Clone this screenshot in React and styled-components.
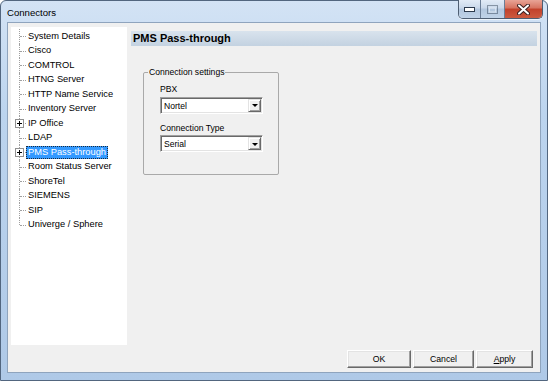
import styled, { createGlobalStyle } from "styled-components";

const GlobalStyle = createGlobalStyle`
  html, body { margin: 0; padding: 0; }
  body {
    width: 548px; height: 381px; overflow: hidden; background: #fff;
    font-family: "Liberation Sans", Arial, sans-serif; color: #000;
  }
`;

const Frame = styled.div`
  box-sizing: border-box;
  width: 548px; height: 381px;
  display: flex; flex-direction: column;
  background: linear-gradient(180deg, #d3e3f5 0%, #bcd4ee 30%, #afc9e7 100%);
  border: 1px solid #52667f;
  border-radius: 6px 6px 0 0;
  padding: 0 6px 7px 6px;
`;

const TitleBar = styled.div`
  height: 21px; flex: none;
  display: flex; align-items: flex-start;
  margin-right: -2px;
`;

const Title = styled.span`
  font-size: 9.6px; line-height: 12px; padding-top: 6px;
`;

const Caption = styled.div`
  margin-left: auto; margin-top: -1px;
  display: flex; height: 18px;
  border: 1px solid #4e5e73; border-top: none;
  border-radius: 0 0 5px 5px; overflow: hidden;
  box-shadow: 0 1px 0 rgba(255,255,255,0.6);
`;

const CapBtn = styled.div`
  width: ${({ $w }) => $w}px; height: 100%;
  display: flex; align-items: center; justify-content: center;
  background: ${({ $close }) => $close
    ? "linear-gradient(180deg, #e8a496 0%, #d6725f 45%, #c2412a 50%, #cc5a3f 100%)"
    : "linear-gradient(180deg, #e2ebf6 0%, #c9d8ea 45%, #b2c6de 50%, #c0d3e8 100%)"};
  & + & { border-left: 1px solid #6b7e97; }
`;

const Client = styled.div`
  flex: 1; display: flex; flex-direction: column;
  background: #f0f0f0;
  border: 1px solid #8fa4bd;
`;

const Body = styled.div`
  height: 322px; flex: none; box-sizing: border-box;
  display: flex; padding: 4px 3px 0 3px;
`;

const Tree = styled.div`
  width: 116px; height: 318px; flex: none; box-sizing: border-box;
  background: #fff; padding: 2px 0 0 1px;
`;

const Row = styled.div`
  display: flex; align-items: center; height: 14.5px;
`;

const Gutter = styled.span`
  position: relative; width: 14px; align-self: stretch; flex: none;
  &::before {
    content: ''; position: absolute; left: 7px; top: 0;
    bottom: ${({ $last }) => ($last ? "50%" : "0")};
    border-left: 1px dotted #a0a0a0;
  }
  &::after {
    content: ''; position: absolute; left: 8px; right: 0; top: 50%;
    border-top: 1px dotted #a0a0a0;
  }
`;

const Expander = styled.span`
  position: absolute; left: 3px; top: calc(50% - 4px); z-index: 1;
  width: 9px; height: 9px; box-sizing: border-box;
  border: 1px solid #919191; background: #fff;
  &::before { content: ''; position: absolute; left: 1px; top: 3px; width: 5px; height: 1px; background: #000; }
  &::after { content: ''; position: absolute; left: 3px; top: 1px; width: 1px; height: 5px; background: #000; }
`;

const ItemLabel = styled.span`
  font-size: 9.3px; line-height: 11px; white-space: nowrap;
  padding: 0 1px; border: 1px solid transparent;
  background: ${({ $selected }) => ($selected ? "#3399ff" : "transparent")};
  color: ${({ $selected }) => ($selected ? "#fff" : "#000")};
  outline: ${({ $selected }) => ($selected ? "1px dotted #1b2a3a" : "none")};
  outline-offset: -1px;
`;

const Panel = styled.div`
  flex: 1; display: flex; flex-direction: column;
  margin-left: 4px; padding-top: 4px;
`;

const PanelHeader = styled.div`
  height: 15px; line-height: 15px; padding-left: 2px;
  font-size: 11px; font-weight: bold; color: #000;
  background: linear-gradient(180deg, #d9e3ed 0%, #c3d2e1 100%);
`;

const Group = styled.fieldset`
  margin: 21px 0 0 12px; width: 136px; height: 108px; box-sizing: border-box;
  border: 1px solid #a9a9a9; border-radius: 2px;
  padding: 5px 14px 0 16px;
  display: flex; flex-direction: column; gap: 7px;
`;

const Legend = styled.legend`
  font-size: 8.6px; line-height: 10px; padding: 0 1px; margin-left: -12px;
`;

const Field = styled.div`
  display: flex; flex-direction: column; gap: 3.5px;
`;

const FieldLabel = styled.span`
  font-size: 8.6px; line-height: 8px; padding-top: 3px;
`;

const Combo = styled.div`
  box-sizing: border-box; width: 103px; height: 17px;
  display: flex; background: #fff; padding: 1px;
  border: 1px solid; border-color: #a0a0a0 #fff #fff #a0a0a0;
  box-shadow: inset 1px 1px 0 #696969, inset -1px -1px 0 #e3e3e3;
`;

const ComboText = styled.span`
  flex: 1; font-size: 8.6px; line-height: 12px; padding: 1px 0 0 2px;
`;

const DropBtn = styled.span`
  width: 13px; height: 13px; box-sizing: border-box; flex: none;
  background: #f0f0f0;
  border: 1px solid; border-color: #e3e3e3 #696969 #696969 #e3e3e3;
  box-shadow: inset 1px 1px 0 #fff, inset -1px -1px 0 #a0a0a0;
  display: flex; align-items: center; justify-content: center;
  &::after {
    content: ''; margin-top: 1px;
    border-left: 3px solid transparent; border-right: 3px solid transparent;
    border-top: 3px solid #000;
  }
`;

const Footer = styled.div`
  display: flex; justify-content: flex-end; gap: 2px;
  padding: 5px 7px 4px 0;
`;

const Button = styled.button`
  box-sizing: border-box; height: 18px; width: ${({ $w }) => $w}px;
  padding: 0; background: #f0f0f0; color: #000;
  font-family: "Liberation Sans", Arial, sans-serif; font-size: 8.7px;
  border: 1px solid; border-color: #fff #696969 #696969 #fff;
  box-shadow: inset -1px -1px 0 #a0a0a0, inset 1px 1px 0 #e3e3e3;
`;

const items = [
  { label: "System Details" },
  { label: "Cisco" },
  { label: "COMTROL" },
  { label: "HTNG Server" },
  { label: "HTTP Name Service" },
  { label: "Inventory Server" },
  { label: "IP Office", expandable: true },
  { label: "LDAP" },
  { label: "PMS Pass-through", expandable: true, selected: true },
  { label: "Room Status Server" },
  { label: "ShoreTel" },
  { label: "SIEMENS" },
  { label: "SIP" },
  { label: "Univerge / Sphere" },
];

function MinGlyph() {
  return (
    <svg width="11" height="5" viewBox="0 0 11 5">
      <rect x="0.5" y="0.5" width="10" height="4" fill="#fff" stroke="#2c3a4d" />
    </svg>
  );
}

function MaxGlyph() {
  return (
    <svg width="11" height="9" viewBox="0 0 11 9" opacity="0.45">
      <rect x="0.5" y="0.5" width="10" height="8" fill="none" stroke="#2c3a4d" />
      <rect x="2.5" y="3" width="6" height="4" fill="none" stroke="#fff" />
    </svg>
  );
}

function CloseGlyph() {
  return (
    <svg width="13" height="11" viewBox="0 0 13 11">
      <path d="M2 1.5 L11 9.5 M11 1.5 L2 9.5" stroke="#3b2020" strokeWidth="4" strokeLinecap="round" />
      <path d="M2 1.5 L11 9.5 M11 1.5 L2 9.5" stroke="#fff" strokeWidth="2" strokeLinecap="round" />
    </svg>
  );
}

export default function App() {
  return (
    <>
      <GlobalStyle />
      <Frame>
        <TitleBar>
          <Title>Connectors</Title>
          <Caption>
            <CapBtn $w={21}><MinGlyph /></CapBtn>
            <CapBtn $w={23}><MaxGlyph /></CapBtn>
            <CapBtn $w={37} $close><CloseGlyph /></CapBtn>
          </Caption>
        </TitleBar>
        <Client>
          <Body>
            <Tree>
              {items.map((it, i) => (
                <Row key={it.label}>
                  <Gutter $last={i === items.length - 1}>
                    {it.expandable && <Expander />}
                  </Gutter>
                  <ItemLabel $selected={it.selected}>{it.label}</ItemLabel>
                </Row>
              ))}
            </Tree>
            <Panel>
              <PanelHeader>PMS Pass-through</PanelHeader>
              <Group>
                <Legend>Connection settings</Legend>
                <Field>
                  <FieldLabel>PBX</FieldLabel>
                  <Combo><ComboText>Nortel</ComboText><DropBtn /></Combo>
                </Field>
                <Field>
                  <FieldLabel>Connection Type</FieldLabel>
                  <Combo><ComboText>Serial</ComboText><DropBtn /></Combo>
                </Field>
              </Group>
            </Panel>
          </Body>
          <Footer>
            <Button $w={64}>OK</Button>
            <Button $w={61}>Cancel</Button>
            <Button $w={57}><u>A</u>pply</Button>
          </Footer>
        </Client>
      </Frame>
    </>
  );
}
